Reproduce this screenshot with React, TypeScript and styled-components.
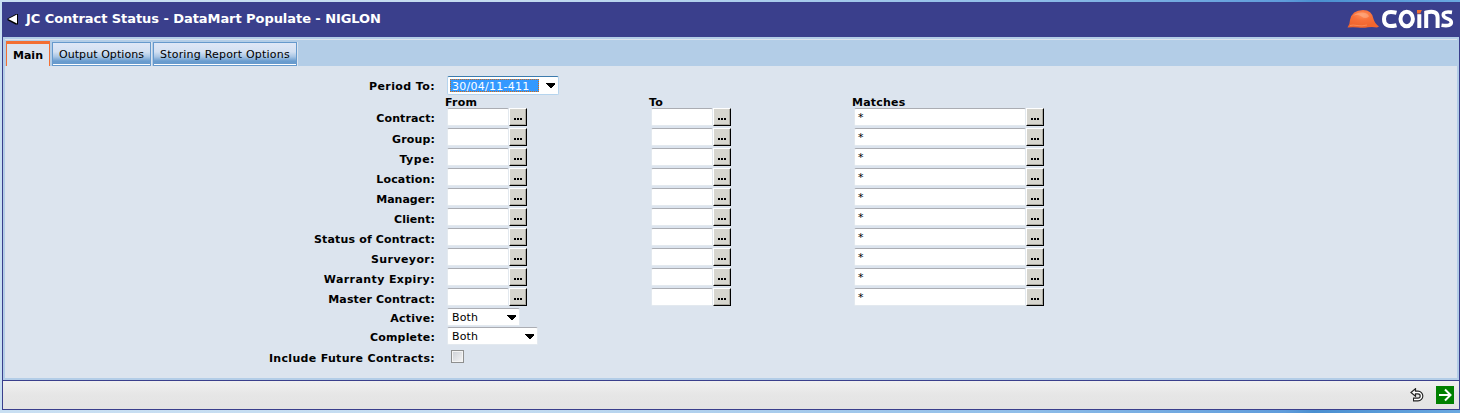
import React from "react";
import styled, { createGlobalStyle } from "styled-components";

const GlobalStyle = createGlobalStyle`
  * { box-sizing: border-box; }
  html, body { margin: 0; padding: 0; }
  body {
    height: 413px;
    overflow: hidden;
    font-family: "DejaVu Sans", Verdana, sans-serif;
    font-size: 11px;
    color: #000;
    background: linear-gradient(90deg, #c9dff2 0, #c3dbf0 35%, #8fbde8 70%, #5f9cdb 88%, #4a8fd0 90%, #6aa8e0 100%);
  }
`;

const Frame = styled.div`
  display: flex;
  flex-direction: column;
  width: 1458px;
  height: 408px;
  margin: 2px 0 0 2px;
  border: 1px solid #3a3f8c;
  background: #b3cde7;
`;

const Header = styled.header`
  display: flex;
  align-items: center;
  flex: none;
  height: 34px;
  padding: 0 5px 0 4px;
  background: #3a3f8c;
`;

const Title = styled.h1`
  flex: 1;
  margin: 0 0 2px 7px;
  font-size: 13px;
  line-height: 16px;
  letter-spacing: -0.06px;
  color: #fff;
  white-space: nowrap;
`;

const Body = styled.main`
  display: flex;
  flex-direction: column;
  flex: none;
  height: 343px;
  padding: 2px 2px 2px 2px;
`;

const TabBar = styled.nav`
  display: flex;
  align-items: flex-start;
  flex: none;
  height: 27px;
  padding: 1px 0 0 1px;
  border-top: 1px solid #dce4ee;
`;

const ActiveTab = styled.div`
  width: 44px;
  height: 26px;
  padding-left: 6px;
  border: 1px solid #f36f32;
  border-top-width: 3px;
  border-bottom: 0;
  background: #dce4ee;
  font-weight: bold;
  line-height: 23px;
`;

const Tab = styled.div<{ $width: number; $tracking: number }>`
  width: ${(p) => p.$width}px;
  height: 24px;
  margin: 1px 0 0 2px;
  padding-left: 6px;
  border: 1px solid #6699cc;
  box-shadow: inset 0 -1px #fff, 1px 0 #dce4ee;
  background: linear-gradient(#dfe7f6 0, #d3e0f2 40%, #a9c6e5 62%, #6b9dcf 82%, #6699cc 100%);
  line-height: 24px;
  letter-spacing: ${(p) => p.$tracking}px;
  white-space: nowrap;
`;

const Form = styled.section`
  display: grid;
  grid-template-columns: 430px 204px 203px 1fr;
  grid-template-rows: 21px 11px repeat(10, 20px) 19px 20px 21px;
  flex: 1;
  padding-top: 10px;
  background: #dce4ee;
`;

const Label = styled.label<{ $top: number; $tracking: number }>`
  grid-column: 1;
  padding-top: ${(p) => p.$top}px;
  font-weight: bold;
  line-height: 14px;
  letter-spacing: ${(p) => p.$tracking}px;
  text-align: right;
  white-space: nowrap;
`;

const ColumnHeading = styled.div<{ $column: number }>`
  grid-column: ${(p) => p.$column};
  padding-left: 10px;
  font-weight: bold;
  line-height: 12px;
  letter-spacing: 0.2px;
`;

const Field = styled.div<{ $column: number }>`
  display: flex;
  align-items: flex-start;
  grid-column: ${(p) => p.$column};
  padding-left: 12px;
`;

const TextInput = styled.div<{ $width: number }>`
  width: ${(p) => p.$width}px;
  height: 18px;
  padding-left: 3px;
  border: 1px solid #e3e9ef;
  border-top-color: #abadb3;
  border-radius: 2px;
  background: #fff;
  line-height: 17px;
`;

const LookupButton = styled.button`
  display: flex;
  align-items: center;
  justify-content: center;
  width: 18px;
  height: 18px;
  padding: 3px 0 0 1px;
  border: 1px solid #000;
  border-top-color: #fff;
  border-left-color: #fff;
  box-shadow: inset -1px -1px #aaa89f;
  background: #d6d5ce;
`;

const Select = styled.div<{ $width: number; $focused?: boolean }>`
  display: flex;
  align-items: center;
  justify-content: space-between;
  width: ${(p) => p.$width}px;
  height: ${(p) => (p.$focused ? 19 : 18)}px;
  padding: ${(p) => (p.$focused ? "0 3px 0 2px" : "0 3px 0 4px")};
  border: 1px solid ${(p) => (p.$focused ? "#b5d4ee" : "#e3e9ef")};
  border-top-color: ${(p) => (p.$focused ? "#3d7bad" : "#abadb3")};
  border-radius: 2px;
  background: #fff;
`;

const SelectText = styled.span`
  padding-top: 2px;
  line-height: 14px;
  letter-spacing: 0.1px;
`;

const Selection = styled.span`
  width: 89px;
  height: 13px;
  padding-left: 1px;
  border: 1px dotted #d86a10;
  background: #3399ff;
  color: #fff;
  line-height: 13px;
  letter-spacing: 0.27px;
`;

const Checkbox = styled.div`
  width: 13px;
  height: 13px;
  margin: 3px 0 0 4px;
  border: 1px solid #8e8f8f;
  box-shadow: inset 0 0 0 1px #f4f4f4;
  background: linear-gradient(135deg, #cbcfd5, #f6f6f6);
`;

const Footer = styled.footer`
  display: flex;
  align-items: center;
  justify-content: flex-end;
  flex: 1;
  gap: 12px;
  padding-right: 5px;
  border-top: 1px solid #3a3f8c;
  background: linear-gradient(#f0f0f0, #e6e6e6 50%, #e4e4e4);
`;

const BackArrow = () => (
  <svg width="12" height="12" viewBox="0 0 12 12">
    <path d="M11 0V10.500H8.500L.5 6.200V4.500L9 0Z" fill="#000" />
    <path d="M10 .5V9.500L1.200 5Z" fill="#fff" />
  </svg>
);

const DropArrow = () => (
  <svg width="9" height="5" viewBox="0 0 9 5" shapeRendering="crispEdges">
    <path d="M0 0H9V1L5 5H4L0 1Z" fill="#000" />
  </svg>
);

const Dots = () => (
  <svg width="9" height="2" viewBox="0 0 9 2" shapeRendering="crispEdges">
    <path d="M0 0h2v2H0zM3 0h2v2H3zM6 0h2v2H6z" fill="#000" />
  </svg>
);

const Logo = () => (
  <svg width="108" height="24" viewBox="0 0 108 24">
    <defs>
      <radialGradient id="helmet" cx="48%" cy="28%" r="60%">
        <stop offset="0" stopColor="#ff8f5a" />
        <stop offset=".5" stopColor="#f8703a" />
        <stop offset="1" stopColor="#f2662e" />
      </radialGradient>
    </defs>
    <path d="M1.500 19.500Q4 16 4 12Q6 2 17 2Q26 2 27.500 11Q29 16 33 18.500L31 19.500Q27 18.500 22 19.200Q17 20.200 12 19.400Q6 19 1.500 19.500Z" fill="url(#helmet)" />
    <path d="M7 8Q10 4 17 4.500Q22 5 23 8.500Q19 11.500 15.500 8.500Q11 6 7 8Z" fill="#ffc3a5" opacity=".4" />
    <path d="M4 17.500Q7 16.500 11 17.500Q16 18.500 21 17" stroke="#ffab80" fill="none" opacity=".5" />
    <g fill="none" stroke="#fff" strokeWidth="4">
      <path d="M50.500 4.700Q38 1.500 38 11Q38 20.500 50.500 17.300" />
      <ellipse cx="60.700" cy="11" rx="6.200" ry="7.200" />
      <path d="M73.300 6.200V20" />
      <path d="M80.200 20V4.500Q91.600 1.800 91.600 9.500V20" />
      <path d="M106 4.400Q97.300 3 97.300 7C97.300 11.300 105.300 10 105.300 14.300Q105.300 18.800 95.500 17.200" strokeWidth="3.600" />
    </g>
    <path d="M71 2h4.800l-1.500 3.500h-3.300z" fill="#f36f32" />
  </svg>
);

const UndoIcon = () => (
  <svg width="14" height="14" viewBox="0 0 14 14" fill="none">
    <path d="M4 4.500H8A3.500 3.500 0 0 1 8 11.500H3" stroke="#222" strokeWidth="3.800" />
    <path d="M5.500 .8L1 4.500L5.500 8.200Z" fill="#fff" stroke="#222" strokeWidth="1.200" />
    <path d="M3.500 4.500H8A3.500 3.500 0 0 1 8 11.500H4" stroke="#fff" strokeWidth="1.500" />
  </svg>
);

const GoIcon = () => (
  <svg width="18" height="18" viewBox="0 0 18 18">
    <path d="M0 0H18V18H0Z" fill="#008000" />
    <path d="M3 9H14M9 3.500L14.500 9L9 14.500" fill="none" stroke="#fff" strokeWidth="2" />
  </svg>
);

const LOOKUPS: { name: string; tracking: number }[] = [
  { name: "Contract", tracking: 0.1 },
  { name: "Group", tracking: 0.15 },
  { name: "Type", tracking: 0.5 },
  { name: "Location", tracking: 0.15 },
  { name: "Manager", tracking: 0 },
  { name: "Client", tracking: 0.05 },
  { name: "Status of Contract", tracking: 0.16 },
  { name: "Surveyor", tracking: 0.4 },
  { name: "Warranty Expiry", tracking: 0.4 },
  { name: "Master Contract", tracking: 0.13 },
];

const Lookup = ({ column, width, value }: { column: number; width: number; value?: string }) => (
  <Field $column={column}>
    <TextInput $width={width}>{value}</TextInput>
    <LookupButton><Dots /></LookupButton>
  </Field>
);

export default function App() {
  return (
    <>
      <GlobalStyle />
      <Frame>
        <Header>
          <BackArrow />
          <Title>JC Contract Status - DataMart Populate - NIGLON</Title>
          <Logo />
        </Header>
        <Body>
          <TabBar>
            <ActiveTab>Main</ActiveTab>
            <Tab $width={99} $tracking={0.06}>Output Options</Tab>
            <Tab $width={144} $tracking={0.2}>Storing Report Options</Tab>
          </TabBar>
          <Form>
            <Label $top={4} $tracking={0.4}>Period To:</Label>
            <Field $column={2}>
              <Select $width={112} $focused>
                <Selection>30/04/11-411</Selection>
                <DropArrow />
              </Select>
            </Field>
            <ColumnHeading $column={2}>From</ColumnHeading>
            <ColumnHeading $column={3}>To</ColumnHeading>
            <ColumnHeading $column={4}>Matches</ColumnHeading>
            {LOOKUPS.map(({ name, tracking }, i) => (
              <React.Fragment key={name}>
                <Label $top={i === 0 ? 4 : 5} $tracking={tracking}>{name}:</Label>
                <Lookup column={2} width={62} />
                <Lookup column={3} width={62} />
                <Lookup column={4} width={172} value="*" />
              </React.Fragment>
            ))}
            <Label $top={4} $tracking={0.25}>Active:</Label>
            <Field $column={2}>
              <Select $width={73}><SelectText>Both</SelectText><DropArrow /></Select>
            </Field>
            <Label $top={4} $tracking={0.2}>Complete:</Label>
            <Field $column={2}>
              <Select $width={91}><SelectText>Both</SelectText><DropArrow /></Select>
            </Field>
            <Label $top={5} $tracking={0.32}>Include Future Contracts:</Label>
            <Field $column={2}>
              <Checkbox />
            </Field>
          </Form>
        </Body>
        <Footer>
          <UndoIcon />
          <GoIcon />
        </Footer>
      </Frame>
    </>
  );
}
